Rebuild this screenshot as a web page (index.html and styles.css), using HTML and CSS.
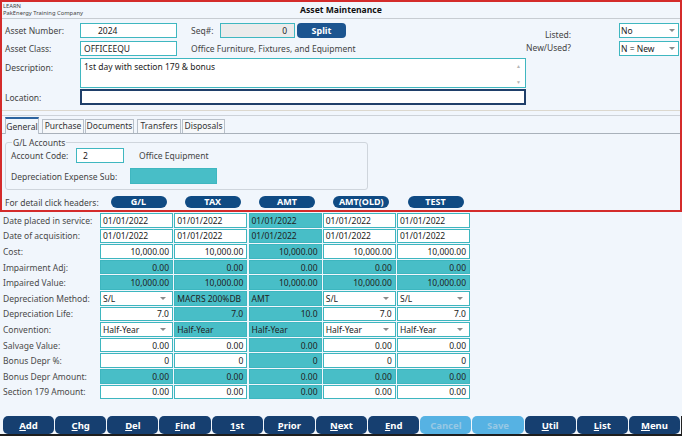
FILE: index.html
```html
<!DOCTYPE html>
<html>
<head>
<meta charset="utf-8">
<link rel="stylesheet" href="styles.css">
</head>
<body>
<div class="window">
  <section class="main">
    <header class="head">
      <div class="company"><div>LEARN</div><div>PakEnergy Training Company</div></div>
      <h1 class="title">Asset Maintenance</h1>
      <div></div>
    </header>
    <div class="form">
      <div class="form-left">
        <div class="row r1">
          <span class="lbl">Asset Number:</span>
          <div class="inp w97 num">2024</div>
          <span class="seq-lbl">Seq#:</span>
          <div class="inp seq">0</div>
          <button class="split">Split</button>
        </div>
        <div class="row r2">
          <span class="lbl">Asset Class:</span>
          <div class="inp w97">OFFICEEQU</div>
          <span class="class-desc">Office Furniture, Fixtures, and Equipment</span>
        </div>
        <div class="row rdesc">
          <span class="lbl">Description:</span>
          <div class="inp textarea"><span class="ta-text">1st day with section 179 &amp; bonus</span><span class="ta-scroll"><span>▲</span><span>▼</span></span></div>
        </div>
        <div class="row rloc">
          <span class="lbl">Location:</span>
          <div class="inp loc"></div>
        </div>
      </div>
      <div class="form-right">
        <div class="rlabels"><span>Listed:</span><span>New/Used?</span></div>
        <div class="rselects">
          <div class="inp sel">No</div>
          <div class="inp sel">N = New</div>
        </div>
      </div>
    </div>
    <div class="sep"></div>
    <nav class="tabs">
      <span class="tab active t1">General</span>
      <span class="tab t2">Purchase</span>
      <span class="tab t3">Documents</span>
      <span class="tab t4">Transfers</span>
      <span class="tab t5">Disposals</span>
    </nav>
    <div class="panel">
      <fieldset class="gl">
        <legend>G/L Accounts</legend>
        <div class="frow">
          <span class="flbl ac">Account Code:</span>
          <div class="inp acin">2</div>
          <span class="acdesc">Office Equipment</span>
        </div>
        <div class="frow f2">
          <span class="flbl des">Depreciation Expense Sub:</span>
          <div class="inp teal desin"></div>
        </div>
      </fieldset>
    </div>
    <div class="detail cols">
      <span class="dlbl">For detail click headers:</span>
      <button class="pill">G/L</button>
      <button class="pill">TAX</button>
      <button class="pill">AMT</button>
      <button class="pill">AMT(OLD)</button>
      <button class="pill">TEST</button>
    </div>
  </section>

  <section class="table cols">
    <span class="rl">Date placed in service:</span>
    <div class="c">01/01/2022</div><div class="c">01/01/2022</div><div class="c t">01/01/2022</div><div class="c">01/01/2022</div><div class="c">01/01/2022</div>

    <span class="rl">Date of acquisition:</span>
    <div class="c">01/01/2022</div><div class="c">01/01/2022</div><div class="c t">01/01/2022</div><div class="c">01/01/2022</div><div class="c">01/01/2022</div>

    <span class="rl">Cost:</span>
    <div class="c r">10,000.00</div><div class="c r">10,000.00</div><div class="c t r">10,000.00</div><div class="c r">10,000.00</div><div class="c r">10,000.00</div>

    <span class="rl">Impairment Adj:</span>
    <div class="c t r">0.00</div><div class="c t r">0.00</div><div class="c t r">0.00</div><div class="c t r">0.00</div><div class="c t r">0.00</div>

    <span class="rl">Impaired Value:</span>
    <div class="c t r">10,000.00</div><div class="c t r">10,000.00</div><div class="c t r">10,000.00</div><div class="c t r">10,000.00</div><div class="c t r">10,000.00</div>

    <span class="rl">Depreciation Method:</span>
    <div class="c dd">S/L</div><div class="c t">MACRS 200%DB</div><div class="c t">AMT</div><div class="c dd">S/L</div><div class="c dd">S/L</div>

    <span class="rl">Depreciation Life:</span>
    <div class="c r">7.0</div><div class="c t r">7.0</div><div class="c t r">10.0</div><div class="c r">7.0</div><div class="c r">7.0</div>

    <span class="rl">Convention:</span>
    <div class="c dd">Half-Year</div><div class="c t">Half-Year</div><div class="c t">Half-Year</div><div class="c dd">Half-Year</div><div class="c dd">Half-Year</div>

    <span class="rl">Salvage Value:</span>
    <div class="c r">0.00</div><div class="c r">0.00</div><div class="c t r">0.00</div><div class="c r">0.00</div><div class="c r">0.00</div>

    <span class="rl">Bonus Depr %:</span>
    <div class="c r">0</div><div class="c r">0</div><div class="c t r">0</div><div class="c r">0</div><div class="c r">0</div>

    <span class="rl">Bonus Depr Amount:</span>
    <div class="c t r">0.00</div><div class="c t r">0.00</div><div class="c t r">0.00</div><div class="c t r">0.00</div><div class="c t r">0.00</div>

    <span class="rl">Section 179 Amount:</span>
    <div class="c r">0.00</div><div class="c r">0.00</div><div class="c t r">0.00</div><div class="c r">0.00</div><div class="c r">0.00</div>
  </section>

  <div class="spacer"></div>

  <footer class="toolbar">
    <button class="tb"><u>A</u>dd</button>
    <button class="tb"><u>C</u>hg</button>
    <button class="tb"><u>D</u>el</button>
    <button class="tb"><u>F</u>ind</button>
    <button class="tb"><u>1</u>st</button>
    <button class="tb"><u>P</u>rior</button>
    <button class="tb"><u>N</u>ext</button>
    <button class="tb"><u>E</u>nd</button>
    <button class="tb off">Cancel</button>
    <button class="tb off">Save</button>
    <button class="tb"><u>U</u>til</button>
    <button class="tb"><u>L</u>ist</button>
    <button class="tb"><u>M</u>enu</button>
  </footer>
</div>
</body>
</html>
```

FILE: styles.css
```css
* { box-sizing: border-box; }
html, body { margin: 0; padding: 0; }
body {
  font-family: "Noto Sans", "Open Sans", sans-serif;
  font-size: 8.5px;
  color: #3a3a3a;
  background: #f1f6fc;
}
button { font-family: inherit; cursor: default; }

.window {
  width: 682px;
  height: 436px;
  background: #f1f6fc;
  display: flex;
  flex-direction: column;
  border-bottom: 2px solid #1e1e1e;
}

.main {
  height: 212px;
  flex: none;
  border: 2px solid #d42b2b;
  display: flex;
  flex-direction: column;
}

.head {
  height: 17px;
  flex: none;
  border-bottom: 1px solid #c7ccd2;
  display: grid;
  grid-template-columns: 1fr auto 1fr;
}
.company {
  font-size: 5.8px;
  line-height: 7px;
  padding: 1px 0 0 1px;
  color: #444;
}
.title {
  margin: 0;
  font-size: 8.6px;
  line-height: 16px;
  font-weight: bold;
  color: #111;
}

.form {
  display: flex;
  margin-top: 4px;
  padding-left: 3px;
}
.form-left { width: 521px; flex: none; }
.row { display: flex; align-items: center; height: 15px; }
.r2 { margin-top: 3px; }
.rdesc { margin-top: 2px; height: 30px; align-items: stretch; }
.rdesc .lbl { padding-top: 4px; }
.rloc { margin-top: 1px; height: 16px; }
.lbl { width: 75px; flex: none; color: #444; }

.inp {
  height: 15px;
  border: 1px solid #3fb7c0;
  background: #fff;
  padding: 0 3px;
  line-height: 13px;
  color: #222;
  white-space: nowrap;
  overflow: hidden;
}
.w97 { width: 97px; }
.num { padding-left: 17px; }
.seq-lbl { margin-left: 14px; width: 29px; color: #444; }
.seq {
  width: 75px;
  background: #ebebeb;
  text-align: right;
  padding-right: 7px;
}
.split {
  margin-left: 2px;
  width: 49px;
  height: 15px;
  border: none;
  border-radius: 4px;
  background: #1c5590;
  color: #fff;
  font-weight: bold;
  font-size: 9px;
  padding: 0;
}
.class-desc { margin-left: 14px; color: #444; }
.textarea {
  width: 446px;
  height: 30px;
  display: flex;
  justify-content: space-between;
  padding: 1px 4px 0 3px;
}
.ta-scroll {
  display: flex;
  flex-direction: column;
  justify-content: space-between;
  font-size: 5px;
  line-height: 8px;
  color: #b5b5b5;
  padding: 2px 0 1px;
}
.loc {
  width: 446px;
  height: 16px;
  border: 2px solid #1f3f6a;
}

.form-right { display: flex; flex: none; }
.rlabels {
  width: 45px;
  display: flex;
  flex-direction: column;
  align-items: flex-end;
  padding-top: 5px;
  line-height: 13px;
  color: #444;
}
.rselects { margin-left: 48px; width: 60px; }
.sel {
  position: relative;
  padding-left: 1px;
}
.sel + .sel { margin-top: 3px; }
.sel::after, .dd::after {
  content: "";
  position: absolute;
  right: 3px;
  top: 5px;
  border-left: 3px solid transparent;
  border-right: 3px solid transparent;
  border-top: 3px solid #8a8a8a;
}

.sep {
  margin-top: 5px;
  height: 6px;
  flex: none;
  border-top: 1px solid #dcd8ce;
  border-bottom: 1px solid #cdd2d8;
}

.tabs {
  margin-top: 1px;
  height: 17px;
  flex: none;
  display: flex;
  align-items: flex-end;
  padding-left: 3px;
  border-bottom: 1px solid #a9b1ba;
}
.tab {
  height: 14px;
  border: 1px solid #b8c0c9;
  border-bottom: none;
  background: #f6f8fa;
  color: #333;
  line-height: 12px;
  text-align: center;
  white-space: nowrap;
}
.tab.active {
  height: 17px;
  margin-bottom: -1px;
  background: #f1f6fc;
  border-top: 2px solid #2c64a0;
  line-height: 15px;
}
.t1 { width: 34px; }
.t2 { width: 42px; margin-left: 3px; }
.t3 { width: 49px; margin-left: 1px; }
.t4 { width: 44px; margin-left: 3px; }
.t5 { width: 43px; margin-left: 1px; }

.panel { padding: 3px 3px 0; }
.gl {
  margin: 0;
  width: 363px;
  border: 1px solid #cfd5dc;
  border-radius: 3px;
  padding: 0 5px 5px;
}
.gl legend {
  padding: 0 1px;
  margin-left: 1px;
  line-height: 11px;
  color: #444;
}
.frow { display: flex; align-items: center; height: 15px; }
.f2 { margin-top: 5px; height: 16px; }
.flbl { flex: none; color: #444; }
.ac { width: 65px; }
.des { width: 119px; }
.acin { width: 48px; padding-left: 6px; }
.acdesc { margin-left: 15px; color: #444; }
.teal { background: #48bec7; }
.desin { width: 87px; height: 16px; }

.cols {
  display: grid;
  grid-template-columns: 95.75px repeat(5, 73px);
  column-gap: 1.25px;
  padding-left: 3px;
}
.detail {
  margin-top: 6px;
  height: 12px;
  align-items: center;
}
.dlbl { color: #444; white-space: nowrap; }
.pill {
  justify-self: center;
  width: 56px;
  height: 12px;
  border: none;
  border-radius: 6px;
  background: #0f4a83;
  color: #fff;
  font-weight: bold;
  font-size: 9px;
  line-height: 12px;
  padding: 0;
}

.table {
  margin-top: 1px;
  grid-auto-rows: 14.6px;
  row-gap: 1px;
  align-items: stretch;
}
.rl {
  display: flex;
  align-items: center;
  color: #4a4a4a;
  white-space: nowrap;
}
.c {
  position: relative;
  border: 1px solid #3db6bf;
  background: #fff;
  padding: 0 3px 0 2px;
  color: #222;
  display: flex;
  align-items: center;
  white-space: nowrap;
  overflow: hidden;
}
.c.t { background: #48bec7; }
.c.r { justify-content: flex-end; }
.dd::after { top: 5px; right: 6px; }

.spacer { flex: 1; }

.toolbar {
  height: 18px;
  flex: none;
  display: flex;
  gap: 1px;
  padding: 0 1px 0 3px;
  border-right: 1px solid #222;
}
.tb {
  flex: 1;
  height: 18px;
  border: none;
  border-radius: 5px;
  background: #163f70;
  color: #fff;
  font-weight: bold;
  font-size: 9.5px;
  padding: 0;
}
.tb.off {
  background: #56b2e3;
  color: #96c8e4;
}
```
